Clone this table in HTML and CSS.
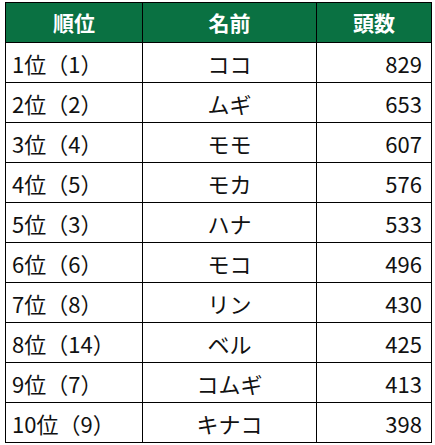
FILE: index.html
```html
<!DOCTYPE html>
<html lang="ja">
<head>
<meta charset="utf-8">
<link rel="stylesheet" href="styles.css">
</head>
<body>
<table class="rank">
  <colgroup>
    <col class="c1"><col class="c2"><col class="c3">
  </colgroup>
  <thead>
    <tr><th>順位</th><th>名前</th><th>頭数</th></tr>
  </thead>
  <tbody>
    <tr><td class="pos">1位（1）</td><td class="name">ココ</td><td class="num">829</td></tr>
    <tr><td class="pos">2位（2）</td><td class="name">ムギ</td><td class="num">653</td></tr>
    <tr><td class="pos">3位（4）</td><td class="name">モモ</td><td class="num">607</td></tr>
    <tr><td class="pos">4位（5）</td><td class="name">モカ</td><td class="num">576</td></tr>
    <tr><td class="pos">5位（3）</td><td class="name">ハナ</td><td class="num">533</td></tr>
    <tr><td class="pos">6位（6）</td><td class="name">モコ</td><td class="num">496</td></tr>
    <tr><td class="pos">7位（8）</td><td class="name">リン</td><td class="num">430</td></tr>
    <tr><td class="pos">8位（14）</td><td class="name">ベル</td><td class="num">425</td></tr>
    <tr><td class="pos">9位（7）</td><td class="name">コムギ</td><td class="num">413</td></tr>
    <tr><td class="pos">10位（9）</td><td class="name">キナコ</td><td class="num">398</td></tr>
  </tbody>
</table>
</body>
</html>
```
FILE: styles.css
```css
html, body {
  margin: 0;
  padding: 0;
  background: #ffffff;
}
body {
  padding: 2px 0 0 5px;
  font-family: "Noto Sans CJK JP", "Noto Sans", sans-serif;
  color: #111111;
}
.rank {
  border-collapse: collapse;
  table-layout: fixed;
  width: 426px;
}
.c1 { width: 137px; }
.c2 { width: 174px; }
.c3 { width: 115px; }
.rank th, .rank td {
  border: 1px solid #000000;
  height: 39px;
  padding: 0;
  line-height: 1;
  white-space: nowrap;
}
.rank th {
  background: #0a7142;
  color: #ffffff;
  font-size: 21px;
  font-weight: 700;
  text-align: center;
}
.rank td {
  font-size: 22px;
}
.pos {
  text-align: left;
  padding-left: 6px !important;
}
.name {
  text-align: center;
}
.num {
  text-align: right;
  padding-right: 9px !important;
}
```
